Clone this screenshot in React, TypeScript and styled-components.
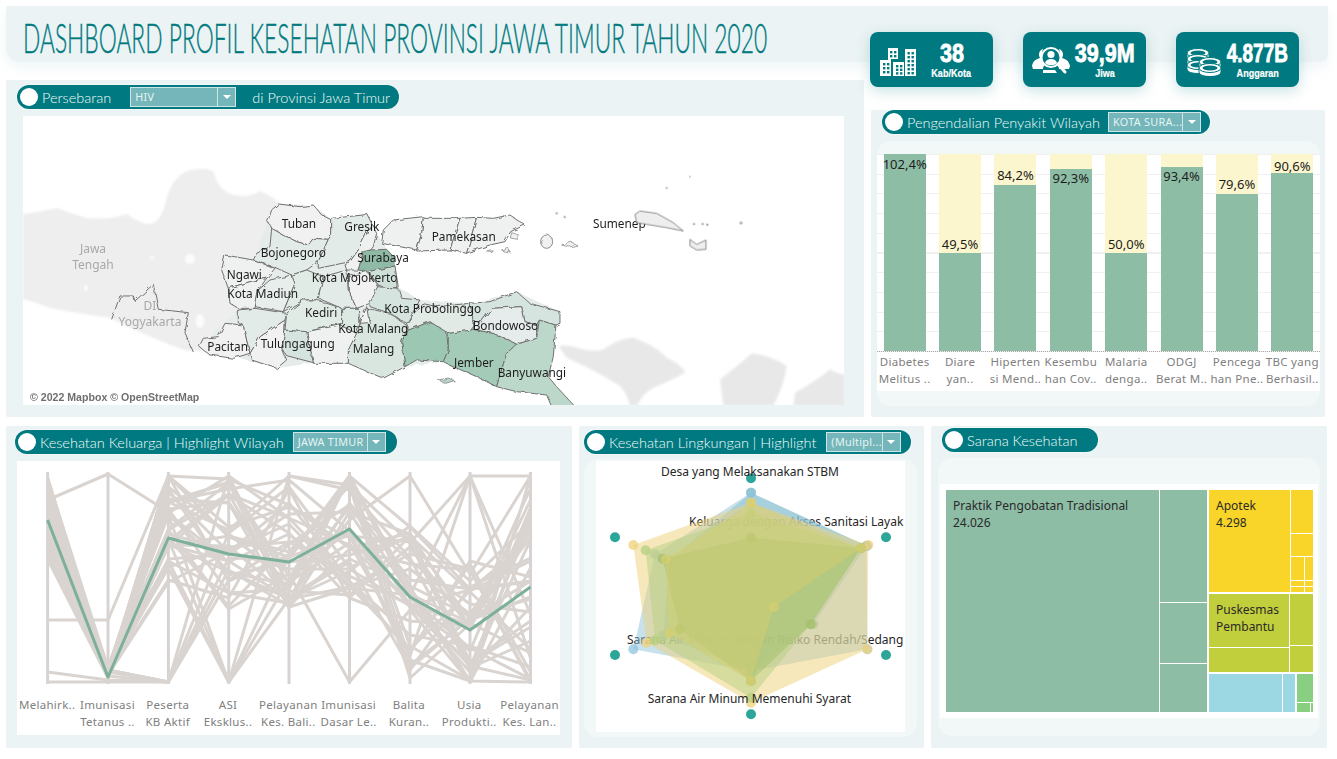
import React from "react";
import { createGlobalStyle, styled } from "styled-components";

const teal = "#007a80";
const panelBg = "#ebf3f4";
const softBg = "#f2f7f7";
const green = "#8ebda6";
const bodyFont = `"Noto Sans", "Open Sans", sans-serif`;
const pillFont = `Lato, "Open Sans", sans-serif`;

const GlobalStyle = createGlobalStyle`
  html, body {
    margin: 0;
    padding: 0;
    background: #fff;
  }
  * {
    box-sizing: border-box;
  }
`;

// ---------- data ----------

const mainland =
  "365,240 375,195 460,210 503,95 535,42 640,45 695,90 800,70 830,130 860,178 895,292 960,330 1110,340 1250,305 1380,365 1368,405 1345,560 1190,590 1030,515 915,530 850,565 745,520 640,518 530,535 298,470 375,400 415,360 390,340";

const regions: { pts: string; fill: string }[] = [
  { pts: "503,95 515,60 535,42 600,50 640,45 665,75 695,90 695,135 685,148 640,145 625,165 590,155 550,135 515,115", fill: "#f0f1f0" },
  { pts: "515,115 550,135 590,155 625,165 640,145 685,148 655,215 620,240 575,255 525,232 460,210 470,190 510,170", fill: "#e2ebe7" },
  { pts: "695,85 790,75 800,70 815,100 790,150 775,180 750,215 655,235 655,215 685,148 695,135", fill: "#e2ebe7" },
  { pts: "815,100 830,130 820,170 812,180 790,185 775,240 740,240 735,225 750,215 775,180 790,150", fill: "#eef1ef" },
  { pts: "812,180 860,178 885,205 885,228 805,245 775,240 790,190", fill: "#8fbba6" },
  { pts: "805,245 885,228 895,292 860,295 835,285", fill: "#cfe0d9" },
  { pts: "850,120 880,90 970,80 965,130 950,180 900,170 845,160", fill: "#eef1ef" },
  { pts: "970,85 1080,85 1050,180 950,183 965,130", fill: "#eef1ef" },
  { pts: "1080,85 1130,82 1100,190 1050,180", fill: "#eef1ef" },
  { pts: "1130,82 1180,85 1230,75 1275,105 1232,125 1215,155 1170,165 1110,185 1100,190", fill: "#eef1ef" },
  { pts: "905,455 925,420 990,395 1040,425 1045,480 1030,515 950,510 915,530", fill: "#9cc7b2" },
  { pts: "1045,430 1120,418 1180,430 1250,462 1220,490 1190,590 1130,560 1060,530 1030,515 1045,480", fill: "#a3cbb8" },
  { pts: "1250,462 1310,445 1318,390 1368,405 1360,500 1345,560 1370,590 1425,650 1355,650 1340,615 1250,605 1190,590 1220,490", fill: "#bcd8ca" },
  { pts: "1110,340 1170,335 1250,305 1290,340 1380,365 1380,400 1368,405 1318,390 1310,405 1275,395 1265,350 1175,355 1145,395 1120,395", fill: "#d5e4de" },
  { pts: "1145,395 1175,355 1265,350 1275,395 1310,405 1310,445 1250,462 1180,430 1120,418 1120,395", fill: "#e6eceb" },
  { pts: "920,400 965,340 1010,350 1110,340 1120,395 1115,420 1045,430 990,395 925,420", fill: "#e2eae6" },
  { pts: "810,330 830,290 895,295 905,325 960,330 920,400 870,370 810,350", fill: "#d5e4de" },
  { pts: "745,480 770,420 800,355 870,370 925,410 905,455 915,530 850,565 790,540 745,520", fill: "#d9e6e0" },
  { pts: "620,425 720,405 770,430 745,480 745,520 640,520", fill: "#eff1f0" },
  { pts: "555,420 620,425 640,518 560,497 545,475", fill: "#d5e4de" },
  { pts: "450,490 480,440 555,390 555,420 545,475 560,510 530,535 455,510", fill: "#f0f1f0" },
  { pts: "298,470 310,445 355,440 375,400 430,405 440,450 450,490 400,505 330,495", fill: "#f0f1f0" },
  { pts: "415,360 465,355 560,370 555,390 480,440 450,490 440,450 430,405 415,400", fill: "#e2ebe7" },
  { pts: "465,350 475,300 510,270 575,255 585,280 550,365", fill: "#e8eeeb" },
  { pts: "365,240 375,195 460,210 525,235 500,265 450,275 385,295", fill: "#eef1ef" },
  { pts: "385,295 450,275 500,265 475,300 465,355 415,355 390,340", fill: "#eef1ef" },
  { pts: "575,255 620,240 670,260 660,300 650,330 610,330 550,365 585,280", fill: "#e0ebe6" },
  { pts: "560,370 610,330 650,330 725,355 725,400 620,425 555,420", fill: "#e0ebe6" },
  { pts: "670,260 740,240 745,300 770,355 725,355 655,325 660,300", fill: "#e2ebe7" },
  { pts: "745,260 800,245 835,285 810,340 770,355 745,300", fill: "#f0f1f0" },
  { pts: "725,355 775,355 780,400 770,430 720,405 725,400", fill: "#dce8e2" },
  { pts: "780,400 800,350 808,398", fill: "#f0f1f0" },
];

const mapLabels: [string, number, number][] = [
  ["Tuban", 545, 102],
  ["Gresik", 733, 113],
  ["Pamekasan", 995, 142],
  ["Bojonegoro", 482, 190],
  ["Surabaya", 772, 205],
  ["Ngawi", 380, 255],
  ["Kota Mojokerto", 635, 265],
  ["Kota Madiun", 382, 312],
  ["Kota Probolinggo", 853, 357],
  ["Kediri", 615, 370],
  ["Bondowoso", 1118, 408],
  ["Kota Malang", 715, 417],
  ["Tulungagung", 482, 462],
  ["Pacitan", 322, 473],
  ["Malang", 758, 477],
  ["Jember", 1062, 520],
  ["Banyuwangi", 1193, 550],
  ["Sumenep", 1479, 102],
];

const diseaseBars = [
  { value: "102,4%", fill: 197, top: 0, label: ["Diabetes", "Melitus .."] },
  { value: "49,5%", fill: 98, top: 80, label: ["Diare", "yan.."] },
  { value: "84,2%", fill: 166, top: 11, label: ["Hiperten", "si Mend.."] },
  { value: "92,3%", fill: 182, top: 14, label: ["Kesembu", "han Cov.."] },
  { value: "50,0%", fill: 98, top: 80, label: ["Malaria", "denga.."] },
  { value: "93,4%", fill: 184, top: 12, label: ["ODGJ", "Berat M.."] },
  { value: "79,6%", fill: 157, top: 20, label: ["Pencega", "han Pne.."] },
  { value: "90,6%", fill: 178, top: 2, label: ["TBC yang", "Berhasil.."] },
];

const axisX = [47.6, 108, 168.4, 228.7, 289, 349.5, 410, 470, 530.5];
const axisLabels = [
  ["Melahirk.."],
  ["Imunisasi", "Tetanus .."],
  ["Peserta", "KB Aktif"],
  ["ASI", "Eksklus.."],
  ["Pelayanan", "Kes. Bali.."],
  ["Imunisasi", "Dasar Le.."],
  ["Balita", "Kuran.."],
  ["Usia", "Produkti.."],
  ["Pelayanan", "Kes. Lan.."],
];

// same lines on every load
function seeded(seed: number) {
  let s = seed;
  return () => {
    s = (s + 0x6d2b79f5) | 0;
    let t = Math.imul(s ^ (s >>> 15), 1 | s);
    t = (t + Math.imul(t ^ (t >>> 7), 61 | t)) ^ t;
    return ((t ^ (t >>> 14)) >>> 0) / 4294967296;
  };
}

const axisRange: [number, number][] = [
  [476, 560],
  [668, 678],
  [476, 590],
  [476, 610],
  [476, 610],
  [476, 600],
  [520, 682],
  [560, 682],
  [476, 682],
];

function buildGreyLines() {
  const rnd = seeded(20);
  const lines: string[] = [];
  for (let i = 0; i < 42; i++) {
    const pts = axisX.map((x, a) => {
      const [lo, hi] = axisRange[a];
      const outlier = a > 1 && rnd() < 0.12;
      const y = outlier ? 476 + Math.round(rnd()) * 206 : lo + rnd() * (hi - lo);
      return `${x},${Math.round(y)}`;
    });
    lines.push(pts.join(" "));
  }
  lines.push(`47.6,682 108,682 168.4,682`);
  lines.push(`47.6,672 108,680 168.4,682`);
  lines.push(`47.6,500 108,474 168.4,512`);
  lines.push(`47.6,620 108,620 168.4,476`);
  return lines;
}
const greyLines = buildGreyLines();
const highlightLine = "47.6,520 108,677 168.4,538 228.7,554 289,562 349.5,529 410,597 470,630 530.5,587";

const radarSeries = [
  { color: "#7fb9c0", pts: "513,205 860,365 700,600 513,740 250,635 268,408" },
  { color: "#8fc3dc", pts: "513,205 860,365 862,675 513,740 160,675 225,390" },
  { color: "#f0d27a", pts: "513,235 865,362 862,675 513,835 200,655 160,362" },
  { color: "#b5d07f", pts: "513,265 843,372 692,600 513,820 225,648 197,378" },
  { color: "#a6c06c", pts: "513,340 843,372 692,600 513,770 300,615 248,403" },
  { color: "#d6ce70", pts: "513,235 843,372 582,548 513,770 268,627 258,405" },
];
const radarAnchors = [
  [513, 162],
  [918, 339],
  [918, 692],
  [513, 870],
  [105, 692],
  [105, 339],
];

// ---------- icons ----------

function BuildingsIcon() {
  const windows: number[][] = [];
  for (let r = 0; r < 6; r++) {
    windows.push([27.5, 6 + r * 4], [31.5, 6 + r * 4]);
  }
  for (let r = 0; r < 3; r++) {
    windows.push([3, 17 + r * 4], [7, 17 + r * 4]);
    windows.push([16, 19 + r * 3.6], [20, 19 + r * 3.6]);
  }
  windows.push([10, 5], [14, 5], [10, 9], [14, 9]);
  return (
    <svg width="37" height="30" viewBox="0 0 37 30">
      <path fill="#fff" d="M0 14h11v16H0zM8 2h10v11h-7v1H8zM13 16h11v14H13zM25 3h11v27H25z" />
      {windows.map(([x, y], i) => (
        <rect key={i} x={x} y={y} width="2.4" height="2.4" fill={teal} />
      ))}
    </svg>
  );
}

function PeopleSearchIcon() {
  return (
    <svg width="38" height="30" viewBox="0 0 38 30">
      <path fill="#fff" d="M0 20c1-5 4-7 8-8-2-3-1-8 3-9-2 5-1 13 3 15-2 1-3 3-3 5H1zM38 20c-1-5-4-7-8-8 2-3 1-8-3-9 2 5 1 13-3 15 2 1 3 3 3 5h10z" />
      <circle cx="19" cy="11.5" r="9.5" fill={teal} stroke="#fff" strokeWidth="2" />
      <circle cx="19" cy="8.5" r="3.6" fill="#fff" />
      <path fill="#fff" d="M13 17c1-3 3-4 6-4s5 1 6 4c-3 3-9 3-12 0zM11 24h12l2 3H11z" />
      <path d="M26 18l7 8" stroke="#fff" strokeWidth="3" strokeLinecap="round" />
    </svg>
  );
}

function CoinsIcon() {
  const coins = [
    [12, 7],
    [12, 13],
    [12, 19],
    [24, 16],
    [24, 22],
  ];
  return (
    <svg width="36" height="30" viewBox="0 0 36 30">
      {coins.map(([cx, cy], i) => (
        <g key={i}>
          <path
            d={`M${cx - 11} ${cy}v4c0 3 5 4.5 11 4.5s11-1.5 11-4.5v-4z`}
            fill="#fff"
            stroke={teal}
            strokeWidth="1"
          />
          <ellipse cx={cx} cy={cy} rx="11" ry="4.5" fill="#fff" stroke={teal} strokeWidth="1" />
          <ellipse cx={cx} cy={cy} rx="7.5" ry="2.6" fill={teal} />
        </g>
      ))}
    </svg>
  );
}

// ---------- components ----------

function FilterSelect({ value, width }: { value: string; width: number }) {
  return (
    <Select $width={width}>
      <SelectValue>{value}</SelectValue>
      <SelectArrow />
    </Select>
  );
}

function MapChart() {
  return (
    <MapBox>
      <FillSvg viewBox="23 116 821 289">
        <defs>
          <filter id="rough" x="-5%" y="-5%" width="110%" height="110%" colorInterpolationFilters="sRGB">
            <feTurbulence type="fractalNoise" baseFrequency="0.05" numOctaves="2" seed="4" result="noise" />
            <feDisplacementMap in="SourceGraphic" in2="noise" scale="12" />
          </filter>
          <filter id="soft">
            <feGaussianBlur stdDeviation="0.8" />
          </filter>
        </defs>
        <g filter="url(#soft)">
          <path
            fill="#eeeeee"
            d="M23 214Q40 212 57 208Q72 214 87 218Q110 220 127 214Q140 224 150 224Q160 222 165 205Q170 180 185 172Q200 166 213 171Q218 188 228 193Q245 200 260 191Q272 196 282 205L300 300L290 352L187 351Q150 338 110 318Q70 312 50 308Q35 302 23 299Z"
          />
          <g fill="#fcfcfc">
            <ellipse cx="190" cy="259" rx="5" ry="5" />
            <ellipse cx="152" cy="258" rx="2" ry="2" />
            <ellipse cx="86" cy="288" rx="2" ry="3" />
            <ellipse cx="200" cy="321" rx="4" ry="7" />
          </g>
          <g transform="translate(480 116) scale(.3333)" fill="#e8e8e8">
            <path d="M235 690Q260 685 290 695Q340 710 370 700Q420 665 460 665Q530 690 560 725Q610 750 615 770Q560 800 520 815Q490 830 470 870L450 870Q440 830 420 810Q340 760 260 725Z" />
            <path d="M720 790Q760 760 815 712Q880 720 920 750Q915 800 880 870L730 870Z" />
            <path d="M945 830Q1000 800 1050 760Q1075 775 1095 775L1095 870L940 870Z" />
          </g>
        </g>
        <g transform="translate(20 116) scale(.3333)" fill="none" stroke="#6f6f6f" strokeWidth="3" filter="url(#rough)">
          <polyline points="275,610 300,540 340,540 345,555 400,505 415,580 505,590 495,650 520,708" />
        </g>
        <MapGreyText x="93" y="253">Jawa</MapGreyText>
        <MapGreyText x="93" y="269">Tengah</MapGreyText>
        <MapGreyText x="150" y="310">DI</MapGreyText>
        <MapGreyText x="150" y="326">Yogyakarta</MapGreyText>
        <g transform="translate(100 190) scale(.3333)">
          <g filter="url(#rough)">
            <polygon points={mainland} fill="#e6ece9" />
            {regions.map((r, i) => (
              <polygon key={i} points={r.pts} fill={r.fill} stroke="#6f6f6f" strokeWidth="3" strokeLinejoin="round" />
            ))}
            <ellipse cx="1340" cy="155" rx="18" ry="20" fill="#f0f1f0" stroke="#777" strokeWidth="2.5" />
            <path d="M1385 165l30-8 18 8-25 6zM1235 128l20 6-2 14-22-4zM1205 180l18-8 8 14-18-2zM1160 185l20-3-4 6z" fill="#f0f1f0" stroke="#777" strokeWidth="2" />
            <path d="M1015 570l30-6 18 8-25 8z" fill="#b8d5c6" stroke="#777" strokeWidth="2" />
          </g>
          {mapLabels.map(([text, x, y]) => (
            <MapLabel key={text} x={x} y={y + 11}>{text}</MapLabel>
          ))}
        </g>
        <g transform="translate(480 116) scale(.3333)" fill="#eee" stroke="#777" strokeWidth="2.5">
          <path d="M465 295L480 285L530 292L580 320L610 345L560 335L500 325L470 320Z" />
          <path d="M630 370L650 385L678 372L678 400L650 402L630 390Z" />
          <circle cx="230" cy="292" r="2" />
          <circle cx="254" cy="303" r="2" />
          <circle cx="783" cy="321" r="3" />
          <circle cx="668" cy="324" r="2" />
          <circle cx="682" cy="326" r="2" />
          <circle cx="642" cy="324" r="2" />
          <circle cx="630" cy="182" r="1" />
          <circle cx="560" cy="216" r="1.5" />
        </g>
      </FillSvg>
      <Attribution>© 2022 Mapbox © OpenStreetMap</Attribution>
    </MapBox>
  );
}

function DiseaseChart() {
  return (
    <ChartWhite>
      <BarPlot>
        {diseaseBars.map((b) => (
          <BarCell key={b.value}>
            <BarTrack>
              <BarFill $height={b.fill} />
              <BarValue $top={b.top}>{b.value}</BarValue>
            </BarTrack>
          </BarCell>
        ))}
      </BarPlot>
      <BarLabels>
        {diseaseBars.map((b) => (
          <AxisLabel key={b.value}>
            {b.label.map((line) => (
              <div key={line}>{line}</div>
            ))}
          </AxisLabel>
        ))}
      </BarLabels>
    </ChartWhite>
  );
}

function ParallelChart() {
  return (
    <ParallelBox>
      <ParallelSvg viewBox="17 461 543 235">
        {axisX.map((x) => (
          <line key={x} x1={x} x2={x} y1="472" y2="684" stroke="#d6d3d2" strokeWidth="3" />
        ))}
        {greyLines.map((pts, i) => (
          <polyline key={i} points={pts} fill="none" stroke="#dad4d1" strokeWidth="3" strokeLinejoin="round" />
        ))}
        <polyline points={highlightLine} fill="none" stroke="#7cb09a" strokeWidth="3" strokeLinejoin="round" />
      </ParallelSvg>
      <ParallelLabels>
        {axisLabels.map((lines, i) => (
          <AxisLabel key={i}>
            {lines.map((line) => (
              <div key={line}>{line}</div>
            ))}
          </AxisLabel>
        ))}
      </ParallelLabels>
    </ParallelBox>
  );
}

function RadarChart() {
  return (
    <RadarBox>
      <FillSvg viewBox="48 110 927 813">
        <RadarText x="970" y="305" textAnchor="end">Keluarga dengan Akses Sanitasi Layak</RadarText>
        <RadarText x="970" y="660" textAnchor="end">Sarana Air Minum dengan Risiko Rendah/Sedang</RadarText>
        {radarSeries.map((s) => (
          <g key={s.color}>
            <polygon points={s.pts} fill={s.color} fillOpacity="0.5" />
            {s.pts.split(" ").map((p) => {
              const [cx, cy] = p.split(",");
              return <circle key={p} cx={cx} cy={cy} r="15" fill={s.color} fillOpacity="0.75" />;
            })}
          </g>
        ))}
        {radarAnchors.map(([cx, cy]) => (
          <circle key={`${cx}-${cy}`} cx={cx} cy={cy} r="15" fill="#2ba698" />
        ))}
        <RadarText x="510" y="155" textAnchor="middle">Desa yang Melaksanakan STBM</RadarText>
        <RadarText x="508" y="836" textAnchor="middle">Sarana Air Minum Memenuhi Syarat</RadarText>
      </FillSvg>
    </RadarBox>
  );
}

function Treemap() {
  const treeGreen = green;
  const yellow = "#f8d528";
  const lime = "#c2cf3c";
  const blue = "#9bd8e3";
  const mint = "#88cf82";
  return (
    <Tree>
      <TreeRow $size={261}>
        <TreeCell $color={treeGreen} $size={213}>
          <TreeLabel>
            Praktik Pengobatan Tradisional
            <br />
            24.026
          </TreeLabel>
        </TreeCell>
        <TreeCol>
          <TreeCell $color={treeGreen} $size={112} />
          <TreeCell $color={treeGreen} $size={60} />
          <TreeCell $color={treeGreen} />
        </TreeCol>
      </TreeRow>
      <TreeCol $gap={2}>
        <TreeRow $size={102}>
          <TreeCell $color={yellow} $size={81}>
            <TreeLabel>
              Apotek
              <br />
              4.298
            </TreeLabel>
          </TreeCell>
          <TreeCol>
            <TreeCell $color={yellow} $size={43} />
            <TreeCell $color={yellow} $size={22} />
            <TreeRow>
              <TreeCol>
                <TreeCell $color={yellow} $size={23} />
                <TreeCell $color={yellow} $size={5} />
                <TreeCell $color={yellow} />
              </TreeCol>
              <TreeCol $size={8}>
                <TreeCell $color={yellow} $size={23} />
                <TreeCell $color={yellow} $size={5} />
                <TreeCell $color={yellow} />
              </TreeCol>
            </TreeRow>
          </TreeCol>
        </TreeRow>
        <TreeRow $size={78}>
          <TreeCol $size={80}>
            <TreeCell $color={lime} $size={53}>
              <TreeLabel>
                Puskesmas
                <br />
                Pembantu
              </TreeLabel>
            </TreeCell>
            <TreeCell $color={lime} />
          </TreeCol>
          <TreeCol>
            <TreeCell $color={lime} $size={51} />
            <TreeCell $color={lime} />
          </TreeCol>
        </TreeRow>
        <TreeRow>
          <TreeRow $size={86}>
            <TreeCell $color={blue} $size={73} />
            <TreeCell $color={blue} />
          </TreeRow>
          <TreeCol $leftGap={1}>
            <TreeCell $color={mint} $size={28} />
            <TreeRow>
              <TreeCell $color={mint} $size={13} />
              <TreeCell $color={mint} />
            </TreeRow>
          </TreeCol>
        </TreeRow>
      </TreeCol>
    </Tree>
  );
}

export default function App() {
  return (
    <Page>
      <GlobalStyle />
      <Header>
        <TitleSlot>
          <TitleText>DASHBOARD PROFIL KESEHATAN PROVINSI JAWA TIMUR TAHUN 2020</TitleText>
        </TitleSlot>
        <Stats>
          <StatCard>
            <IconSlot><BuildingsIcon /></IconSlot>
            <StatText>
              <StatNumber $squeeze={0.86}>38</StatNumber>
              <StatCaption>Kab/Kota</StatCaption>
            </StatText>
          </StatCard>
          <StatCard>
            <IconSlot><PeopleSearchIcon /></IconSlot>
            <StatText>
              <StatNumber $squeeze={0.86}>39,9M</StatNumber>
              <StatCaption>Jiwa</StatCaption>
            </StatText>
          </StatCard>
          <StatCard>
            <IconSlot><CoinsIcon /></IconSlot>
            <StatText>
              <StatNumber $squeeze={0.76}>4.877B</StatNumber>
              <StatCaption>Anggaran</StatCaption>
            </StatText>
          </StatCard>
        </Stats>
      </Header>

      <TopRow>
        <MapPanel>
          <Pill $width={382} $left={11}>
            <PillDot />
            <PillTitle>Persebaran</PillTitle>
            <PillGap $width={19} />
            <FilterSelect value="HIV" width={106} />
            <PillGap $width={16} />
            <PillTitle>di Provinsi Jawa Timur</PillTitle>
          </Pill>
          <MapChart />
        </MapPanel>
        <DiseasePanel>
          <Pill $width={328} $left={11}>
            <PillDot />
            <PillTitle>Pengendalian Penyakit Wilayah</PillTitle>
            <PillGap $width={8} />
            <FilterSelect value="KOTA SURA..." width={93} />
          </Pill>
          <SoftBox $top={7} $left={6} $width={443} $height={265} $pad="13px 0 0">
            <DiseaseChart />
          </SoftBox>
        </DiseasePanel>
      </TopRow>

      <BottomRow>
        <Panel>
          <PillWrap $top={4}>
            <Pill $width={382} $left={9}>
              <PillDot />
              <PillTitle>Kesehatan Keluarga | Highlight Wilayah</PillTitle>
              <PillGap $width={9} />
              <FilterSelect value="JAWA TIMUR" width={93} />
            </Pill>
          </PillWrap>
          <ParallelChart />
        </Panel>
        <Panel>
          <PillWrap $top={4}>
            <Pill $width={327} $left={5}>
              <PillDot />
              <PillTitle>Kesehatan Lingkungan | Highlight</PillTitle>
              <PillGap $width={10} />
              <FilterSelect value="(Multipl..." width={73} />
            </Pill>
          </PillWrap>
          <SoftBox $top={5} $left={5} $width={333} $height={278} $pad="2px 12px">
            <RadarChart />
          </SoftBox>
        </Panel>
        <Panel>
          <PillWrap $top={2}>
            <Pill $width={156} $left={11}>
              <PillDot />
              <PillTitle>Sarana Kesehatan</PillTitle>
            </Pill>
          </PillWrap>
          <SoftBox $top={6} $left={7} $width={382} $height={278} $pad="26px 2px">
            <TreeWhite>
              <Treemap />
            </TreeWhite>
          </SoftBox>
        </Panel>
      </BottomRow>
    </Page>
  );
}

// ---------- styles ----------

const Page = styled.div`
  width: 1337px;
  height: 759px;
  padding: 6px 11px 0 6px;
  overflow: hidden;
  background: #fff;
`;

const Header = styled.header`
  position: relative;
  height: 74px;
  display: flex;
  justify-content: space-between;
  align-items: flex-start;

  &::before {
    content: "";
    position: absolute;
    inset: 0 -2px 18px 0;
    background: ${panelBg};
    border-radius: 2px 2px 8px 14px;
    box-shadow: 0 6px 12px rgba(233, 242, 243, 0.7);
  }
`;

const TitleSlot = styled.div`
  flex: 1;
  min-width: 0;
`;

const TitleText = styled.h1`
  position: relative;
  display: inline-block;
  margin: 12px 0 0 17px;
  font-family: Lato, "Open Sans", sans-serif;
  font-size: 41px;
  line-height: 40px;
  font-weight: 300;
  color: ${teal};
  white-space: nowrap;
  transform: scaleX(0.556);
  transform-origin: left center;
  -webkit-text-stroke: 0.4px ${teal};
`;

const Stats = styled.div`
  position: relative;
  display: flex;
  gap: 30px;
  margin: 26px 27px 0 0;
`;

const StatCard = styled.div`
  width: 123px;
  height: 55px;
  display: flex;
  align-items: center;
  padding: 0 7px 0 9px;
  background: ${teal};
  border-radius: 8px;
  box-shadow: 0 4px 14px rgba(0, 122, 128, 0.22);
  color: #fff;
`;

const IconSlot = styled.div`
  flex: 0 0 38px;
  display: flex;
  justify-content: center;
  align-items: center;
  margin-top: 3px;
`;

const StatText = styled.div`
  flex: 1;
  min-width: 0;
  display: flex;
  flex-direction: column;
  align-items: center;
  font-family: "Liberation Sans", Arial, sans-serif;
  font-weight: 700;
  white-space: nowrap;
`;

const StatNumber = styled.div<{ $squeeze: number }>`
  font-size: 25px;
  line-height: 28px;
  transform: scaleX(${(p) => p.$squeeze});
  -webkit-text-stroke: 0.8px #fff;
`;

const StatCaption = styled.div`
  font-size: 11px;
  line-height: 13px;
  transform: scaleX(0.82);
  -webkit-text-stroke: 0.2px #fff;
`;

const TopRow = styled.div`
  display: grid;
  grid-template-columns: 858px 454px;
  gap: 7px;
  height: 337px;
`;

const Panel = styled.section`
  background: ${panelBg};
  border-radius: 2px;
  min-width: 0;
`;

const MapPanel = styled(Panel)`
  padding-top: 5px;
`;

const DiseasePanel = styled(Panel)`
  margin-top: 30px;
`;

const BottomRow = styled.div`
  display: grid;
  grid-template-columns: 566px 345px 396px;
  column-gap: 7px;
  margin-top: 9px;
  height: 322px;
`;

const PillWrap = styled.div<{ $top: number }>`
  padding-top: ${(p) => p.$top}px;
`;

const Pill = styled.div<{ $width: number; $left: number }>`
  width: ${(p) => p.$width}px;
  height: 24px;
  margin-left: ${(p) => p.$left}px;
  padding-left: 3px;
  display: flex;
  align-items: center;
  background: ${teal};
  border-radius: 12px;
  box-shadow: 0 0 0 1px rgba(255, 255, 255, 0.35);
`;

const PillDot = styled.span`
  flex: 0 0 18px;
  height: 18px;
  margin-right: 4px;
  border-radius: 50%;
  background: #fff;
`;

const PillTitle = styled.span`
  font-family: ${pillFont};
  font-size: 14.5px;
  font-weight: 300;
  color: #f4fbfb;
  white-space: nowrap;
`;

const PillGap = styled.span<{ $width: number }>`
  flex: 0 0 ${(p) => p.$width}px;
`;

const Select = styled.div<{ $width: number }>`
  flex: 0 0 ${(p) => p.$width}px;
  height: 20px;
  display: flex;
  background: #75b6ba;
  border: 1px solid #cfe5e6;
`;

const SelectValue = styled.span`
  flex: 1;
  min-width: 0;
  padding-left: 4px;
  font-family: ${bodyFont};
  font-size: 10.8px;
  line-height: 18px;
  letter-spacing: 0.3px;
  color: #e6f4f4;
  white-space: nowrap;
  overflow: hidden;
`;

const SelectArrow = styled.span`
  flex: 0 0 18px;
  border-left: 1px solid #cfe5e6;
  display: flex;
  justify-content: center;
  align-items: center;

  &::after {
    content: "";
    border-left: 4px solid transparent;
    border-right: 4px solid transparent;
    border-top: 4px solid #fff;
  }
`;

const MapBox = styled.div`
  position: relative;
  width: 821px;
  height: 289px;
  margin: 7px 0 0 17px;
  background: #fff;
  overflow: hidden;
`;

const FillSvg = styled.svg`
  display: block;
  width: 100%;
  height: 100%;
`;

const MapLabel = styled.text`
  font-family: ${bodyFont};
  font-size: 35.5px;
  fill: #1d1d1d;
`;

const MapGreyText = styled.text`
  font-family: ${bodyFont};
  font-size: 12px;
  fill: #a8a8a8;
  text-anchor: middle;
`;

const Attribution = styled.div`
  position: absolute;
  left: 5px;
  bottom: 1px;
  padding: 1px 2px;
  font-family: "Liberation Sans", Arial, sans-serif;
  font-size: 10.6px;
  font-weight: 700;
  color: #6f6f6f;
  background: rgba(255, 255, 255, 0.7);
`;

const SoftBox = styled.div<{ $top: number; $left: number; $width: number; $height: number; $pad: string }>`
  width: ${(p) => p.$width}px;
  height: ${(p) => p.$height}px;
  margin: ${(p) => p.$top}px 0 0 ${(p) => p.$left}px;
  padding: ${(p) => p.$pad};
  background: ${softBg};
  border-radius: 14px;
`;

const ChartWhite = styled.div`
  height: 237px;
  background: #fff;
`;

const BarPlot = styled.div`
  height: 198px;
  display: grid;
  grid-template-columns: repeat(8, 1fr);
  border-bottom: 1px dotted #a9a9a9;
  background: repeating-linear-gradient(to bottom, #f0f0f0 0 1px, transparent 1px 19.7px);
`;

const BarCell = styled.div`
  display: flex;
  justify-content: center;
`;

const BarTrack = styled.div`
  position: relative;
  width: 42px;
  height: 100%;
  display: flex;
  align-items: flex-end;
  background: #fbf6cd;
`;

const BarFill = styled.div<{ $height: number }>`
  width: 100%;
  height: ${(p) => p.$height}px;
  background: ${green};
`;

const BarValue = styled.span<{ $top: number }>`
  position: absolute;
  top: ${(p) => p.$top}px;
  left: -4px;
  right: -4px;
  font-family: ${bodyFont};
  font-size: 13px;
  line-height: 20px;
  text-align: center;
  color: #1d1d1d;
`;

const BarLabels = styled.div`
  display: grid;
  grid-template-columns: repeat(8, 1fr);
  padding-top: 1px;
`;

const AxisLabel = styled.div`
  font-family: ${bodyFont};
  font-size: 11.5px;
  line-height: 17px;
  letter-spacing: 0.3px;
  text-align: center;
  color: #808080;
  white-space: nowrap;
  display: flex;
  flex-direction: column;
  align-items: center;
`;

const ParallelBox = styled.div`
  width: 543px;
  height: 274px;
  margin: 7px 0 0 11px;
  background: #fff;
`;

const ParallelSvg = styled.svg`
  display: block;
  width: 543px;
  height: 235px;
`;

const ParallelLabels = styled.div`
  display: grid;
  grid-template-columns: repeat(9, 60.3px);
`;

const RadarBox = styled.div`
  height: 271px;
  background: #fff;
`;

const RadarText = styled.text`
  font-family: ${bodyFont};
  font-size: 36px;
  fill: #262626;
`;

const TreeWhite = styled.div`
  height: 234px;
  padding: 6px 5px 6px 6px;
  background: #fff;
`;

const Tree = styled.div`
  height: 100%;
  display: flex;
  gap: 2px;
`;

const TreeRow = styled.div<{ $size?: number }>`
  flex: ${(p) => (p.$size ? `0 0 ${p.$size}px` : "1 1 0")};
  min-width: 0;
  min-height: 0;
  display: flex;
  gap: 1px;
`;

const TreeCol = styled.div<{ $size?: number; $gap?: number; $leftGap?: number }>`
  flex: ${(p) => (p.$size ? `0 0 ${p.$size}px` : "1 1 0")};
  min-width: 0;
  min-height: 0;
  margin-left: ${(p) => p.$leftGap ?? 0}px;
  display: flex;
  flex-direction: column;
  gap: ${(p) => p.$gap ?? 1}px;
`;

const TreeCell = styled.div<{ $color: string; $size?: number }>`
  flex: ${(p) => (p.$size ? `0 0 ${p.$size}px` : "1 1 0")};
  min-width: 0;
  min-height: 0;
  background: ${(p) => p.$color};
`;

const TreeLabel = styled.div`
  padding: 7px 7px 0;
  font-family: ${bodyFont};
  font-size: 12px;
  line-height: 17px;
  color: #2a2a2a;
  white-space: nowrap;
`;
